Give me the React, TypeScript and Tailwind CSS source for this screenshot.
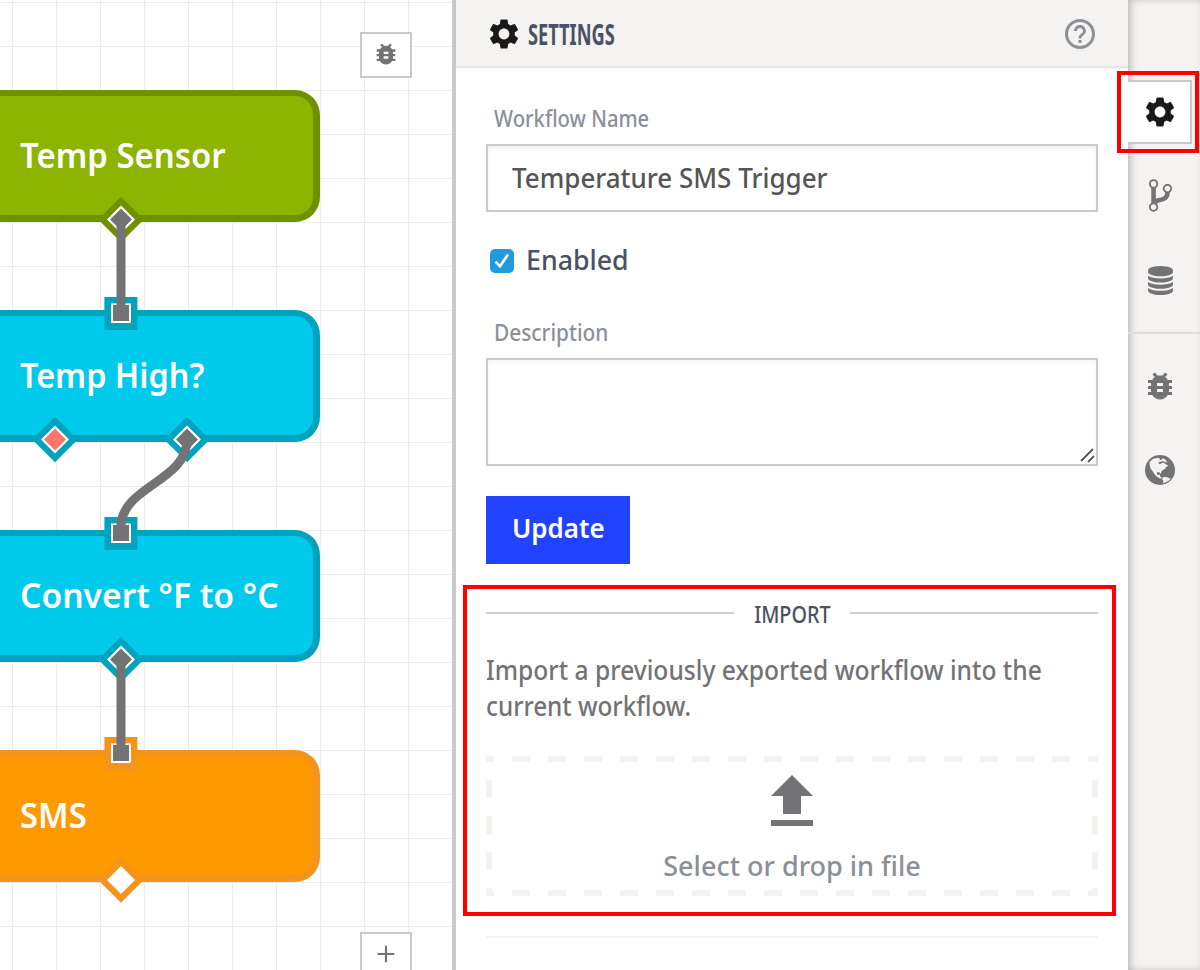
import type { ReactNode } from "react";
import { IoMdGitBranch } from "react-icons/io";
import { MdBugReport, MdHelpOutline, MdSettings } from "react-icons/md";

type Node = { label: string; box: string; text: string };

const nodes: Node[] = [
  { label: "Temp Sensor", box: "top-[90px] bg-[#8cb400] border-[#709000]", text: "scale-x-[0.94]" },
  { label: "Temp High?", box: "top-[310px] bg-[#00caeb] border-[#00a3be]", text: "scale-x-[0.925]" },
  { label: "Convert °F to °C", box: "top-[530px] bg-[#00caeb] border-[#00a3be]", text: "scale-x-[0.96]" },
  { label: "SMS", box: "top-[750px] bg-[#ff9900] border-[#f3941d]", text: "scale-x-[0.94]" },
];

function Diamond({ x, y, outer, fill }: { x: number; y: number; outer: string; fill: string }) {
  const d = (r: number) => `M${x} ${y - r}L${x + r} ${y}L${x} ${y + r}L${x - r} ${y}Z`;
  return (
    <g>
      <path d={d(22.8)} fill={outer} />
      <path d={d(14)} fill="#fff" />
      <path d={d(11)} fill={fill} />
    </g>
  );
}

function Port({ y, outer }: { y: number; outer: string }) {
  return (
    <g>
      <rect x={104.4} y={y - 16} width={33} height={33} fill={outer} />
      <rect x={111} y={y - 9.6} width={20} height={19.6} fill="#fff" />
      <rect x={113} y={y - 8} width={16} height={16} fill="#737375" />
    </g>
  );
}

function Canvas() {
  return (
    <div className="relative h-full w-[452px] shrink-0 overflow-hidden bg-white bg-[linear-gradient(to_right,#ececec_1px,transparent_1px),linear-gradient(to_bottom,#ececec_1px,transparent_1px)] bg-[size:44px_44px] bg-[position:12px_2px]">
      {nodes.map((n) => (
        <div
          key={n.label}
          className={`absolute left-[-40px] flex h-[132px] w-[360px] items-center rounded-[25px] border-[7px] border-t-[6px] pb-0.5 pl-[52.6px] ${n.box}`}
        >
          <span className={`inline-block origin-left text-[35px] leading-none font-[560] whitespace-nowrap text-white ${n.text}`}>
            {n.label}
          </span>
        </div>
      ))}
      <svg className="absolute inset-0" width="452" height="970" viewBox="0 0 452 970" fill="none">
        <Diamond x={121} y={219.5} outer="#709000" fill="#737375" />
        <Diamond x={55} y={439.5} outer="#00a3be" fill="#ff756b" />
        <Diamond x={187} y={439.5} outer="#00a3be" fill="#737375" />
        <Diamond x={121} y={659.5} outer="#00a3be" fill="#737375" />
        <Diamond x={121} y={880} outer="#f3941d" fill="#fff" />
        <Port y={313} outer="#00a3be" />
        <Port y={533} outer="#00a3be" />
        <Port y={753} outer="#f3941d" />
        <g stroke="#737375" strokeWidth="9">
          <path d="M121 219.5V313" />
          <path d="M187 439.5C187 482 121 486 121 527V533" />
          <path d="M121 659.5V753" />
        </g>
      </svg>
      <div className="absolute top-8 left-[360px] flex h-[46px] w-[52px] items-center justify-center border-2 border-[#c9c9c9] bg-white pb-0.5 text-[28px] text-[#737375]">
        <MdBugReport />
      </div>
      <div className="absolute top-[932px] left-[360px] flex h-[46px] w-[52px] items-center justify-center border-2 border-[#c9c9c9] bg-white pb-0.5">
        <svg width="18" height="18" viewBox="0 0 18 18" stroke="#737375" strokeWidth="2.2">
          <path d="M9 .7v16.6M.7 9h16.6" />
        </svg>
      </div>
    </div>
  );
}

function Label({ children, scale }: { children: ReactNode; scale: string }) {
  return (
    <div className="h-[30px] pl-2 text-[23px] leading-[30px] text-[#8b9097]">
      <span className={`inline-block origin-left font-medium whitespace-nowrap ${scale}`}>{children}</span>
    </div>
  );
}

function DropZone() {
  return (
    <div className="relative mt-8 flex h-[140px] flex-col items-center pt-[10px]">
      <svg className="absolute inset-0" width="612" height="140" stroke="#f4f3f1" strokeWidth="6" strokeDasharray="18 18">
        <path d="M0 3H612M0 137H612" strokeDashoffset="10" />
        <path d="M3 0V140" strokeDashoffset="12" />
        <path d="M609 0V140" strokeDashoffset="12" />
      </svg>
      <svg width="72" height="72" viewBox="0 0 24 24" fill="#737375">
        <path d="M9 16h6v-6h4l-7-7-7 7h4zM5 18h14v2H5z" />
      </svg>
      <span className="mt-[10px] inline-block text-[27px] leading-[36px] font-medium whitespace-nowrap text-[#8b9097]">
        Select or drop in file
      </span>
    </div>
  );
}

function Panel() {
  return (
    <div className="flex h-full w-[676px] shrink-0 flex-col border-l-4 border-[#c9c9c9] bg-white">
      <header className="flex h-[68px] shrink-0 items-center border-b-2 border-[#e7e6e4] bg-[#f4f3f1] pr-[30px] pl-[30px] shadow-[0_1px_4px_rgba(0,0,0,0.06)]">
        <MdSettings className="mt-0.5 text-[36px] text-[#1a1a1a]" />
        <span className="mt-0.5 ml-[6px] inline-block w-[90px] origin-left scale-x-[0.65] text-[28px] leading-none font-bold whitespace-nowrap text-[#4b5162]">
          SETTINGS
        </span>
        <MdHelpOutline className="mt-0.5 ml-auto text-[36px] text-[#8b9097]" />
      </header>
      <div className="flex flex-col px-[30px]">
        <div className="mt-[35px]">
          <Label scale="scale-x-[0.88]">Workflow Name</Label>
        </div>
        <div className="mt-[11px] flex h-[68px] items-center border-2 border-[#c9c9c9] pb-0.5 pl-[24px] shadow-[inset_0_3px_4px_rgba(0,0,0,0.06)]">
          <span className="inline-block origin-left scale-x-[0.962] text-[27px] leading-none font-medium whitespace-nowrap text-[#555]">
            Temperature SMS Trigger
          </span>
        </div>
        <div className="mt-[30px] flex h-[36px] items-center pl-1">
          <span className="mt-0.5 flex size-6 items-center justify-center rounded-[5px] bg-[#209bdc]">
            <svg width="24" height="24" viewBox="0 0 24 24" fill="none" stroke="#fff" strokeWidth="2.6">
              <path d="M5.5 12.7L10 17.3L18 5.5" />
            </svg>
          </span>
          <span className="ml-3 inline-block origin-left -translate-y-px scale-x-[0.99] text-[27px] leading-none font-medium text-[#4b5162]">
            Enabled
          </span>
        </div>
        <div className="mt-[39px]">
          <Label scale="scale-x-[0.907]">Description</Label>
        </div>
        <div className="mt-[11px] flex h-[108px] items-end justify-end border-2 border-[#c9c9c9] shadow-[inset_0_3px_4px_rgba(0,0,0,0.04)]">
          <svg width="18" height="18" viewBox="0 0 18 18" stroke="#555" strokeWidth="1.8">
            <path d="M3 15L15 3M10 16L16 10" />
          </svg>
        </div>
        <div className="mt-[30px] flex h-[68px] w-[144px] items-center justify-center bg-[#2142ff] pb-1.5 text-[27px] leading-none font-semibold text-white">
          <span className="inline-block scale-x-[0.96]">Update</span>
        </div>
        <div className="mt-[31px] flex h-[36px] items-center text-[23px] leading-none text-[#4b5162]">
          <span className="h-0.5 w-[248px] bg-[#d0d0d0]" />
          <span className="flex w-[116px] justify-center pt-0.5">
            <span className="inline-block scale-x-[0.86] font-medium">IMPORT</span>
          </span>
          <span className="h-0.5 w-[248px] bg-[#d0d0d0]" />
        </div>
        <p className="mt-[21px] text-[27px] leading-[36px] font-medium whitespace-nowrap text-[#737375]">
          <span className="block origin-left scale-x-[0.911]">Import a previously exported workflow into the</span>
          <span className="block origin-left scale-x-[0.899]">current workflow.</span>
        </p>
        <DropZone />
        <div className="mt-10 h-0.5 bg-[#f3f3f3]" />
      </div>
    </div>
  );
}

function Database() {
  return (
    <svg width="25" height="29" viewBox="0 0 1536 1792" fill="currentColor">
      <path d="M768 768q237 0 443-43t325-127v170q0 69-103 128t-280 93.5-385 34.5-385-34.5-280-93.5-103-128v-170q119 84 325 127t443 43zm0 768q237 0 443-43t325-127v170q0 69-103 128t-280 93.5-385 34.5-385-34.5-280-93.5-103-128v-170q119 84 325 127t443 43zm0-384q237 0 443-43t325-127v170q0 69-103 128t-280 93.5-385 34.5-385-34.5-280-93.5-103-128v-170q119 84 325 127t443 43zm0-1152q208 0 385 34.5t280 93.5 103 128v128q0 69-103 128t-280 93.5-385 34.5-385-34.5-280-93.5-103-128v-128q0-69 103-128t280-93.5 385-34.5z" />
    </svg>
  );
}

function Globe() {
  return (
    <svg width="30" height="30" viewBox="0 0 90 90">
      <circle cx="45" cy="45" r="45" fill="#737375" />
      <path
        fill="#f4f3f1"
        d="M14 20L24 12L38 8L46 11L43 16L50 14L53 10L60 13L67 22L60 21L54 18L48 20L42 21L40 25L46 28L50 24L56 23L63 28L70 32L63 36L61 41L53 45L49 50L48 57L43 52L37 52L35 57L39 60L44 58L45 64L51 69L46 71L36 65L30 60L24 50L17 41L14 31Z"
      />
      <path fill="#f4f3f1" d="M54 67L62 65L70 68L77 71L71 77L62 82L54 85L55 77L51 72Z" />
    </svg>
  );
}

function Rail() {
  return (
    <div className="flex h-full w-[72px] shrink-0 flex-col bg-[#f4f3f1] pt-20 text-[#737375] shadow-[inset_4px_0_7px_-1px_rgba(0,0,0,0.2),inset_0_0_8px_rgba(0,0,0,0.05)]">
      <div className="flex h-16 w-16 items-center justify-center border-2 border-l-0 border-[#c9c9c9] bg-white pl-0.5 text-[36px] text-[#1a1a1a]">
        <MdSettings />
      </div>
      <div className="flex h-[104px] w-16 items-center justify-center pb-px text-[37px]">
        <IoMdGitBranch />
      </div>
      <div className="flex h-16 w-16 items-center justify-center">
        <Database />
      </div>
      <div className="mt-5 h-0.5 bg-[#dedddc]" />
      <div className="mt-[10px] flex h-[84px] w-16 items-center justify-center text-[36px]">
        <MdBugReport />
      </div>
      <div className="flex h-[84px] w-16 items-center justify-center">
        <Globe />
      </div>
    </div>
  );
}

export default function App() {
  return (
    <div className="relative flex h-[970px] w-[1200px] overflow-hidden bg-white font-['Noto_Sans',sans-serif]">
      <Canvas />
      <Panel />
      <Rail />
      <div className="pointer-events-none absolute top-[71px] left-[1117px] h-[82px] w-[82px] border-4 border-[#ff0000]" />
      <div className="pointer-events-none absolute top-[585px] left-[463px] h-[331px] w-[653px] border-4 border-[#ff0000]" />
    </div>
  );
}
